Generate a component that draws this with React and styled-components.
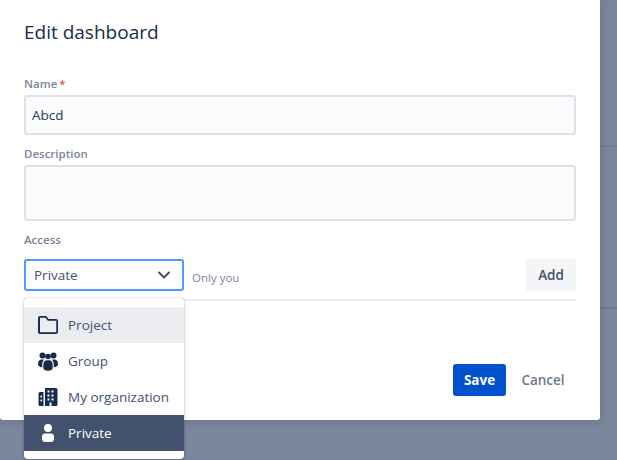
import React from 'react';
import styled, { createGlobalStyle } from 'styled-components';

const Global = createGlobalStyle`
  html, body { margin: 0; padding: 0; height: 100%; overflow: hidden; }
  body { background: #7a869a; font-family: "Open Sans", "Noto Sans", sans-serif; }
  * { box-sizing: border-box; }
`;
const Page = styled.div`display: flex; width: 617px; height: 460px; position: relative; overflow: hidden;`;
const Modal = styled.section`
  width: 600px; height: 420px; flex: none; background: #fff; padding: 20px 24px 0;
  border-radius: 0 0 3px 3px; box-shadow: 0 0 8px rgba(9,30,66,.18); display: flex; flex-direction: column; position: relative;
`;
const Gutter = styled.div`flex: 1; display: flex; flex-direction: column;`;
const GutterLine = styled.div`height: 2px; margin-top: ${p => p.$top}px; background: #6f7b90;`;
const Title = styled.h1`margin: 0 0 32px; font-size: 19px; line-height: 24px; font-weight: 500; color: #172b4d; height: 24px;`;
const Label = styled.label`display: block; font-size: 11.500px; line-height: 16px; font-weight: 600; color: #7a869a; margin-bottom: 3px; height: 16px;`;
const Req = styled.span`color: #de350b; margin-left: 2px; font-weight: 400;`;
const Field = styled.div`
  height: ${p => p.$h}px; border: 2px solid #dfe1e6; border-radius: 3px; background: #fafbfc;
  padding: 0 6px; margin-bottom: 11px; display: flex; align-items: center; font-size: 13.500px; color: #253858;
`;
const AccessRow = styled.div`display: flex; align-items: flex-start; margin-top: 8px;`;
const Select = styled.div`
  width: 160px; height: 32px; border: 2px solid #4c9aff; border-radius: 3px; background: #fff; padding: 0 12px 0 8px;
  display: flex; align-items: center; justify-content: space-between; font-size: 13.500px; color: #42526e;
`;
const Hint = styled.span`margin: 11px 0 0 8px; font-size: 11.500px; line-height: 16px; color: #7a869a; flex: 1;`;
const Add = styled.button`
  width: 50px; height: 32px; border: 0; border-radius: 3px; background: #f4f5f7; color: #42526e; font: 600 13.500px "Open Sans", sans-serif; padding: 0;
`;
const Divider = styled.hr`height: 2px; border: 0; margin: 8px 0 0; background: #ebecf0;`;
const Actions = styled.div`display: flex; justify-content: flex-end; margin-top: 63px; gap: 8px; padding-right: 4px;`;
const Save = styled.button`
  width: 53px; height: 32px; border: 0; border-radius: 3px; background: #0052cc; color: #fff; font: 700 13.500px "Open Sans", sans-serif; padding: 0;
`;
const Cancel = styled.button`
  width: 58px; height: 32px; border: 0; background: none; color: #6b778c; font: 600 13.500px "Open Sans", sans-serif; padding: 0;
`;
const Menu = styled.ul`
  position: absolute; left: 24px; top: 298px; width: 160px; height: 161px; margin: 0; padding: 9px 0 8px; list-style: none;
  background: #fff; border-radius: 4px; box-shadow: 0 0 1px rgba(9,30,66,.5), 0 2px 4px rgba(9,30,66,.2);
`;
const Item = styled.li`
  height: 36px; display: flex; align-items: center; padding: 0 0 1px 13px; gap: 9px; font-size: 13.500px;
  background: ${p => p.$active ? '#42526e' : p.$hover ? '#ebecf0' : '#fff'};
  color: ${p => p.$active ? '#fff' : '#42526e'};
`;
const Ico = styled.svg`width: 22px; height: 22px; flex: none; fill: ${p => p.$active ? '#fff' : '#172b4d'};`;

const Folder = () => (
  <Ico viewBox="0 0 22 22"><path fillRule="evenodd" d="M3 2h6.200l2.400 3H19a2 2 0 0 1 2 2v11a2 2 0 0 1-2 2H3a2 2 0 0 1-2-2V4a2 2 0 0 1 2-2zm0 1.700v14.600h16.300V6.700h-8.500L8.400 3.700z" /></Ico>
);
const People = () => (
  <Ico viewBox="0 0 22 22">
    <circle cx="5.500" cy="5.500" r="3" /><circle cx="16.500" cy="5.500" r="3" /><circle cx="11" cy="6.500" r="2.800" />
    <path d="M1 14c0-3 1.500-4.500 3.500-4.500h2.500C5.800 11 5.200 12.800 5.200 15v2.600C2.700 17 1 15.800 1 14zM21 14c0-3-1.500-4.500-3.500-4.500H15c1.200 1.500 1.800 3.300 1.800 5.500v2.600C19.300 17 21 15.800 21 14z" />
    <path d="M6.300 14.500c0-2.700 1.700-4.200 3.700-4.200h2c2 0 3.700 1.500 3.700 4.200V18c0 1.700-2.200 2.800-4.700 2.800S6.300 19.700 6.300 18z" />
  </Ico>
);
const Building = () => (
  <Ico viewBox="0 0 22 22"><path fillRule="evenodd" d="M8 2h11a1.500 1.500 0 0 1 1.500 1.500v15A1.500 1.500 0 0 1 19 20H8zm2.500 2.500v2h2v-2zm4 0v2h2v-2zm-4 4v2h2v-2zm4 0v2h2v-2zm-4 4v2h2v-2zm4 0v2h2v-2zm-2 4V20h2v-3.500zM3 6h3.500v14H3a1.500 1.500 0 0 1-1.500-1.500v-11A1.500 1.500 0 0 1 3 6zm.5 3.500v2h1.500v-2zm0 4v2h1.500v-2z" /></Ico>
);
const Person = () => (
  <Ico $active viewBox="0 0 22 22"><circle cx="11" cy="6" r="4" /><path d="M5 14.500c0-1.700 1.300-3 3-3h6c1.700 0 3 1.300 3 3V17c0 1.700-1.300 3-3 3H8c-1.700 0-3-1.300-3-3z" /></Ico>
);
const Chevron = () => (
  <svg width="12" height="8" viewBox="0 0 12 8" fill="none" stroke="#42526e" strokeWidth="2" strokeLinecap="round" strokeLinejoin="round"><path d="M1 1.500 6 6.500l5-5" /></svg>
);

export default function App() {
  return (
    <Page>
      <Global />
      <Modal>
        <Title>Edit dashboard</Title>
        <Label>Name<Req>*</Req></Label>
        <Field $h={40}>Abcd</Field>
        <Label>Description</Label>
        <Field $h={56} />
        <Label>Access</Label>
        <AccessRow>
          <Select>Private<Chevron /></Select>
          <Hint>Only you</Hint>
          <Add>Add</Add>
        </AccessRow>
        <Divider />
        <Actions>
          <Save>Save</Save>
          <Cancel>Cancel</Cancel>
        </Actions>
      </Modal>
      <Gutter>
        <GutterLine $top={145} />
        <GutterLine $top={160} />
      </Gutter>
      <Menu>
        <Item $hover><Folder />Project</Item>
        <Item><People />Group</Item>
        <Item><Building />My organization</Item>
        <Item $active><Person />Private</Item>
      </Menu>
    </Page>
  );
}
